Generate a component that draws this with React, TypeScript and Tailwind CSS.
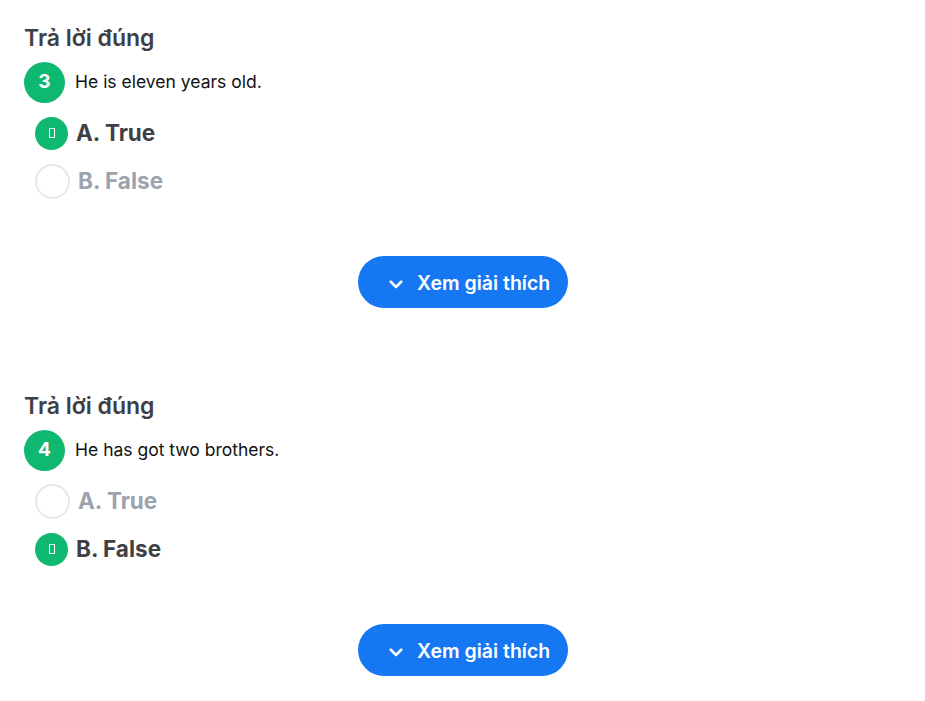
import React from "react";

interface Question {
  no: number;
  text: string;
  answer: "A" | "B";
}

const questions: Question[] = [
  { no: 3, text: "He is eleven years old.", answer: "A" },
  { no: 4, text: "He has got two brothers.", answer: "B" },
];

const Option: React.FC<{ label: string; checked: boolean }> = ({ label, checked }) => {
  if (checked) {
    return (
      <div className="flex items-center h-[48px]">
        <div className="ml-[11px] w-[33px] h-[33px] rounded-full bg-[#0fb870] flex items-center justify-center">
          <span className="w-[6px] h-[10px] border border-white" />
        </div>
        <span className="ml-[8px] text-[22.5px] font-bold text-[#3f3f46]">{label}</span>
      </div>
    );
  }
  return (
    <div className="flex items-center h-[48px]">
      <div className="ml-[11px] w-[35px] h-[35px] rounded-full border-2 border-[#e5e7eb]" />
      <span className="ml-[8px] text-[22.5px] font-bold text-[#9ca3af]">{label}</span>
    </div>
  );
};

const QuestionBlock: React.FC<{ q: Question }> = ({ q }) => {
  return (
    <div className="h-[368px]">
      <h3 className="text-[23px] font-semibold text-[#3f3f46] leading-[28px] pt-[24px]">Trả lời đúng</h3>
      <div className="flex items-center mt-[10px]">
        <div className="w-[41px] h-[41px] rounded-full bg-[#0fb870] flex items-center justify-center text-white font-bold text-[19px]">
          {q.no}
        </div>
        <span className="ml-[10px] text-[17.5px] text-[#111]">{q.text}</span>
      </div>
      <div className="mt-[6px]">
        <Option label="A. True" checked={q.answer === "A"} />
        <Option label="B. False" checked={q.answer === "B"} />
      </div>
      <div className="flex justify-center mt-[51px]">
        <button className="flex items-center gap-[12px] h-[52px] w-[210px] rounded-full bg-[#1677f2] text-white text-[19.5px] font-semibold pl-[29px] pt-[3px] ml-[1px]">
          <svg width="18" height="18" viewBox="0 0 24 24" fill="none" stroke="currentColor" strokeWidth="3.4" strokeLinecap="round" strokeLinejoin="round">
            <path d="M5 9l7 7 7-7" />
          </svg>
          Xem giải thích
        </button>
      </div>
    </div>
  );
};

const App: React.FC = () => {
  return (
    <div className="w-[925px] h-[701px] overflow-hidden bg-white px-[24px]" style={{ fontFamily: "Inter, 'Noto Sans', sans-serif" }}>
      {questions.map((q) => (
        <QuestionBlock key={q.no} q={q} />
      ))}
    </div>
  );
};

export default App;
